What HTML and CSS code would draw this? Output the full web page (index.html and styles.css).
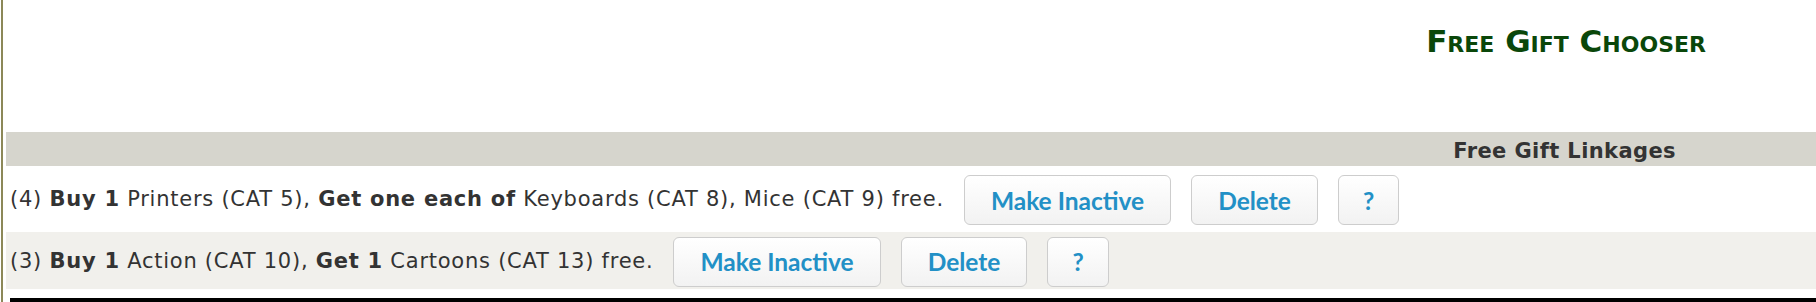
FILE: index.html
```html
<!DOCTYPE html>
<html lang="en">
<head>
    <meta charset="UTF-8">
    <meta name="viewport" content="width=device-width, initial-scale=1.0">
    <title>Free Gift Chooser</title>
    <link rel="stylesheet" href="styles.css">
</head>
<body>
    <div class="page">
        <div class="title-area">
            <h1 class="title">Free Gift Chooser</h1>
        </div>

        <div class="linkages">
            <div class="linkages-head">Free Gift Linkages</div>

            <div class="link-row">
                <span class="link-text">(4) <b>Buy 1</b> Printers (CAT 5), <b>Get one each of</b> Keyboards (CAT 8), Mice (CAT 9) free.</span>
                <button class="btn">Make Inactive</button>
                <button class="btn">Delete</button>
                <button class="btn btn-help">?</button>
            </div>

            <div class="link-row alt">
                <span class="link-text">(3) <b>Buy 1</b> Action (CAT 10), <b>Get 1</b> Cartoons (CAT 13) free.</span>
                <button class="btn">Make Inactive</button>
                <button class="btn">Delete</button>
                <button class="btn btn-help">?</button>
            </div>
        </div>

        <div class="rule"></div>
    </div>
</body>
</html>
```

FILE: styles.css
```css
body {
    margin: 0;
    font-family: "DejaVu Sans", Verdana, sans-serif;
    font-size: 21px;
    color: #333;
    background: #fff;
    overflow: hidden;
}

.page {
    margin-left: 1px;
    padding-left: 3px;
    border-left: 2px solid #8c8858;
    min-height: 100vh;
}

.title-area {
    height: 132px;
    box-sizing: border-box;
    padding: 23px 110px 0 0;
    text-align: right;
}

.title {
    margin: 0;
    font-size: 31px;
    line-height: 36px;
    font-weight: bold;
    font-variant: small-caps;
    color: #0a470a;
}

.linkages-head {
    background-color: #d6d5cd;
    padding: 4px 140px 0 0;
    line-height: 30px;
    font-weight: bold;
    letter-spacing: 0.4px;
    text-align: right;
}

.link-row {
    display: flex;
    align-items: center;
    gap: 20px;
    height: 66px;
    padding-left: 4px;
    background-color: #fff;
}

.link-row.alt {
    height: 57px;
    background-color: #f1f0ec;
}

.link-text {
    letter-spacing: 0.75px;
}

.link-text b {
    font-weight: bold;
}

.btn {
    height: 50px;
    margin-top: 2px;
    padding: 0 26px;
    font-family: Lato, "Open Sans", sans-serif;
    font-size: 24.5px;
    font-weight: bold;
    color: #2290c6;
    border: 1px solid #cdcdcd;
    border-radius: 6px;
    background: linear-gradient(#ffffff, #f2f2f2);
    cursor: pointer;
}

.btn-help {
    padding: 0 24px;
}

.rule {
    margin: 9px 0 0 4px;
    border-top: 6px solid #000;
}
```
